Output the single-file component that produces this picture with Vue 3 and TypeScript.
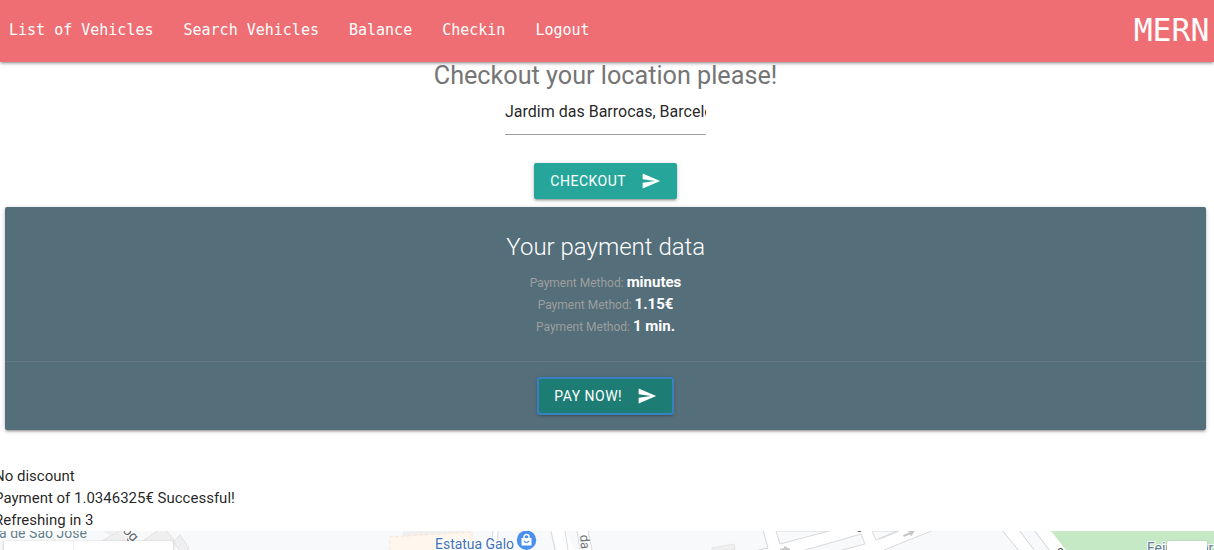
<script setup lang="ts">
const links: string[] = ['List of Vehicles', 'Search Vehicles', 'Balance', 'Checkin', 'Logout']
const payment: string[] = ['minutes', '1.15€', '1 min.']
const messages: string[] = ['No discount', 'Payment of 1.0346325€ Successful!', 'Refreshing in 3']
const location = 'Jardim das Barrocas, Barcelos'
</script>

<template>
  <div class="page">
    <nav class="nav">
      <ul class="links">
        <li v-for="link in links" :key="link"><a>{{ link }}</a></li>
      </ul>
      <a class="brand">MERN</a>
    </nav>

    <main>
      <h1 class="heading">Checkout your location please!</h1>
      <div class="field">{{ location }}</div>
      <button class="btn checkout">
        <span>Checkout</span>
        <svg viewBox="0 0 24 24"><path d="M2.01 21L23 12 2.01 3 2 10l15 2-15 2z" /></svg>
      </button>

      <section class="card">
        <div class="card-content">
          <h2>Your payment data</h2>
          <p v-for="value in payment" :key="value"><span>Payment Method: </span><b>{{ value }}</b></p>
        </div>
        <div class="card-action">
          <button class="btn pay">
            <span>Pay now!</span>
            <svg viewBox="0 0 24 24"><path d="M2.01 21L23 12 2.01 3 2 10l15 2-15 2z" /></svg>
          </button>
        </div>
      </section>

      <div class="messages">
        <p v-for="message in messages" :key="message">{{ message }}</p>
      </div>
    </main>

    <svg class="map" width="1214" height="19" viewBox="0 0 1214 19">
      <defs>
        <filter id="soft" x="-10%" y="-60%" width="120%" height="240%">
          <feDropShadow dx="0" dy="1" stdDeviation="1.5" flood-opacity=".3" />
        </filter>
      </defs>
      <rect width="1214" height="19" fill="#f8f9fb" />
      <g fill="#efeff0" stroke="#e2e2e4">
        <path d="M99 12L122 -2L131 7L112 19H104z" />
        <path d="M140 12L160 -2H165L174 9L159 19H149z" />
        <path d="M173 11L180 4L189 17L183 23z" />
      </g>
      <path d="M101 -1H117L110 4z" fill="#efeff0" />
      <path d="M403 0H473L403 6z" fill="#efefef" />
      <path d="M390 6L472 1V19H390z" fill="#fff6ed" />
      <path d="M390 19V6L472 1V10" fill="none" stroke="#fce6d2" stroke-dasharray="4 2" />

      <path d="M492 0H498V19H492zM552 0H566L574 19H557zM579 0L584 19H592L588 0z" fill="#fff" />
      <path d="M493 0L491 19M498 0L497 19M551 0L555 19M565 0L568 19M577 0L580 19M588 0L592 19" stroke="#d8dade" fill="none" />
      <path d="M763 0L768 17L755 19H1052L1030 0z" fill="#fff" />
      <path d="M776 0L780 13L829 0z" fill="#f8f9fb" stroke="#d6d8dc" />
      <path d="M802 20L861 3L865 13L838 20z" fill="#f8f9fb" stroke="#d6d8dc" />
      <path d="M872 0L876 9L897 0z" fill="#f8f9fb" stroke="#d6d8dc" />
      <path d="M880 8L899 0" fill="none" stroke="#d6d8dc" />
      <path d="M886 19L934 0H1003L1019 19z" fill="#f8f9fb" />
      <path d="M884 19L934 -1" fill="none" stroke="#d6d8dc" />
      <path d="M1019 0H1035L1050 19H1034z" fill="#f8f9fb" />
      <path d="M763 -1L768 17L754 20M1002 -1L1019 20M1019 -1L1035 20M1034 -1L1050 20" fill="none" stroke="#d2d4d8" />
      <path d="M1036 0H1052L1067 19H1051z" fill="#fff" />
      <path d="M1051 0H1214V19H1066z" fill="#c5e8c5" />
      <path d="M712 17L734 13L735 19H712z" fill="#f0f0f0" stroke="#e4e4e5" />
      <path d="M903 4L909 1.5L908 0H915L911 5.5L910 3.5L904 6z" fill="#c7c8ca" />
      <path d="M780 18L784 17V15L790 18V19H780z" fill="#c7c8ca" />
      <path d="M41 9L44 19M53 6L56 12" stroke="#dddfe2" />

      <g class="map-text">
        <text x="-1" y="7.3" font-size="14" fill="#607d8b" textLength="88">a de São José</text>
        <text x="435" y="18" font-size="14" fill="#4272b8" textLength="79">Estatua Galo</text>
        <text x="1147" y="22" font-size="14" fill="#607d8b">Feira</text>
        <text x="1201" y="22" font-size="14" fill="#607d8b">ar</text>
        <text transform="translate(122 0) rotate(47)" font-size="14" fill="#5f6368">og</text>
        <text transform="translate(580 4) rotate(86)" font-size="13" fill="#6b7478">da</text>
        <text x="856" y="1" font-size="12" fill="#62676b">o</text>
        <text x="1057" y="24" font-size="12" fill="#555">o</text>
      </g>
      <circle cx="526.5" cy="9.2" r="9.7" fill="#4a90ef" />
      <path d="M521.5 7H531.5V14.5H521.5z" fill="#fff" />
      <path d="M524 8V6A2.5 2.5 0 0 1 529 6V8" fill="none" stroke="#fff" stroke-width="1.4" />
      <path d="M524 10Q526.5 13 529 10" fill="none" stroke="#4a90ef" stroke-width="1.2" />
      <rect x="4" y="10" width="169" height="20" rx="2" fill="#fff" filter="url(#soft)" />
      <path d="M73.5 10V19" stroke="#eee" />
      <rect x="1167" y="10" width="40" height="20" rx="2" fill="#fff" filter="url(#soft)" />
    </svg>
  </div>
</template>

<style>
body {
  margin: 0;
  overflow: hidden;
}
</style>

<style scoped>
.page {
  width: 1214px;
  height: 550px;
  overflow: hidden;
  display: flex;
  flex-direction: column;
  background: #fff;
  font-family: Roboto, sans-serif;
  font-size: 15px;
  line-height: 22px;
  color: rgba(0, 0, 0, 0.87);
}
p, h1, h2, ul {
  margin: 0;
  padding: 0;
}
.nav {
  flex: none;
  height: 62px;
  display: flex;
  justify-content: space-between;
  background: #ee6e73;
  color: #fff;
  font-family: "DejaVu Sans Mono", monospace;
  line-height: 60px;
  box-shadow: 0 2px 2px 0 rgba(0, 0, 0, 0.14), 0 3px 1px -2px rgba(0, 0, 0, 0.12), 0 1px 5px 0 rgba(0, 0, 0, 0.2);
}
.links {
  display: flex;
  gap: 30px;
  padding-left: 9px;
  list-style: none;
}
.brand {
  font-size: 31.5px;
  padding-right: 4.5px;
}
main {
  flex: none;
  height: 469px;
  display: flex;
  flex-direction: column;
  align-items: center;
  padding-right: 3px;
}
.heading {
  font-size: 25.2px;
  font-weight: 400;
  line-height: 27px;
  color: #757575;
}
.field {
  box-sizing: border-box;
  width: 201px;
  height: 46px;
  border-bottom: 1px solid #9e9e9e;
  font-size: 16px;
  line-height: 45px;
  white-space: nowrap;
  overflow: hidden;
}
.btn {
  display: flex;
  align-items: center;
  gap: 15px;
  height: 36px;
  padding: 0 16px;
  border: 0;
  border-radius: 2px;
  background: #26a69a;
  color: #fff;
  font: 400 14px/36px Roboto, sans-serif;
  letter-spacing: 0.5px;
  text-transform: uppercase;
  box-shadow: 0 2px 2px 0 rgba(0, 0, 0, 0.14), 0 3px 1px -2px rgba(0, 0, 0, 0.12), 0 1px 5px 0 rgba(0, 0, 0, 0.2);
}
.btn svg {
  width: 20px;
  height: 20px;
  margin-right: -0.5px;
  fill: #fff;
}
.checkout {
  margin-top: 28px;
}
.card {
  box-sizing: border-box;
  width: 1201px;
  height: 223px;
  margin: 8px 0 0 0;
  border-radius: 2px;
  background: #546e7a;
  color: #fff;
  text-align: center;
  box-shadow: 0 2px 2px 0 rgba(0, 0, 0, 0.14), 0 3px 1px -2px rgba(0, 0, 0, 0.12), 0 1px 5px 0 rgba(0, 0, 0, 0.2);
}
.card-content {
  box-sizing: border-box;
  height: 154px;
  padding-top: 24px;
}
.card h2 {
  margin-bottom: 8px;
  padding-left: 0.5px;
  font-size: 24px;
  font-weight: 300;
  line-height: 32px;
}
.card p {
  height: 22px;
}
.card p span {
  font-size: 12px;
  color: #9e9e9e;
}
.card p b {
  font-weight: 700;
}
.card-action {
  display: flex;
  justify-content: center;
  padding-top: 16px;
  border-top: 1px solid rgba(160, 160, 160, 0.2);
}
.pay {
  background: #1d7d74;
  outline: 2px solid #3a80c0;
  outline-offset: -1px;
}
.messages {
  align-self: flex-start;
  margin: 35px 0 0 -6px;
}
.map {
  flex: none;
  display: block;
}
.map-text {
  font-family: Roboto, sans-serif;
  paint-order: stroke;
  stroke: #fff;
  stroke-width: 2px;
}
</style>
